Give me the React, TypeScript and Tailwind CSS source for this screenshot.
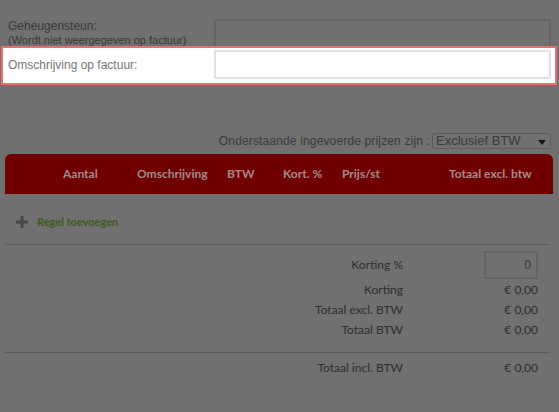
import React from 'react';

const columns = [
  { label: 'Aantal', width: 'w-[74px]' },
  { label: 'Omschrijving', width: 'w-[90px]' },
  { label: 'BTW', width: 'w-[56px]' },
  { label: 'Kort. %', width: 'w-[59px]' },
  { label: 'Prijs/st', width: 'w-[107px]' },
  { label: 'Totaal excl. btw', width: 'w-auto' },
];

const totals = [
  { label: 'Korting', value: '€ 0,00' },
  { label: 'Totaal excl. BTW', value: '€ 0,00' },
  { label: 'Totaal BTW', value: '€ 0,00' },
];

const TotalRow: React.FC<{ label: string; value: string }> = ({ label, value }) => (
  <div className="flex h-[20px] items-center justify-end pr-[21px]">
    <span className="text-right">{label}</span>
    <span className="w-[135px] text-right">{value}</span>
  </div>
);

export default function App() {
  return (
    <div className="relative h-[412px] w-[559px] overflow-hidden bg-[#707070] font-['Liberation_Sans',Arial,sans-serif]">
      {/* Geheugensteun */}
      <div className="mt-[19px] flex h-[27px] pl-[8px]">
        <div className="w-[206px] text-[#383838]">
          <div className="text-[12px] leading-[15px]">Geheugensteun:</div>
          <div className="whitespace-nowrap text-[11px] leading-[13px]">(Wordt niet weergegeven op factuur)</div>
        </div>
        <div className="h-[27px] w-[337px] border-2 border-b-0 border-[#646464]" />
      </div>

      {/* Highlighted row */}
      <div className="ml-[1px] flex h-[39px] w-[556px] items-start border-2 border-[#f26b6b] bg-white pl-[5px] pt-[2px]">
        <div className="flex h-[29px] w-[206px] items-center text-[12px] text-[#767676]">
          Omschrijving op factuur:
        </div>
        <div className="h-[29px] w-[337px] border-2 border-[#e2e2e2] bg-white" />
      </div>

      {/* Price mode */}
      <div className="mt-[48px] flex h-[16px] items-center justify-end pr-[8px] text-[12px] text-[#3a3a3a]">
        <span className="mr-[2px] tracking-[0.15px]">Onderstaande ingevoerde prijzen zijn :</span>
        <div className="flex h-[16px] w-[119px] items-center justify-between rounded-[2px] border border-[#5c5c5c] pl-[3px] pr-[4px] text-[13px]">
          <span>Exclusief BTW</span>
          <span className="mt-[2px] h-0 w-0 border-x-[4px] border-t-[5px] border-x-transparent border-t-[#111]" />
        </div>
      </div>

      {/* Table header */}
      <div className="ml-[5px] mt-[5px] flex h-[40px] w-[548px] items-center rounded-t-[6px] bg-[#700000] pl-[58px] font-['Lato',sans-serif] text-[12px] font-bold text-[#a48b8b]">
        {columns.map((c) => (
          <span key={c.label} className={`${c.width} whitespace-nowrap`}>
            {c.label}
          </span>
        ))}
      </div>

      {/* Add line */}
      <div className="mt-[17px] flex h-[22px] items-center pl-[16px] font-['Lato',sans-serif] text-[11px] font-bold text-[#3d5b1c]">
        <svg width="12" height="12" viewBox="0 0 12 12" className="mr-[9px]">
          <path d="M4.5 0h3v4.5H12v3H7.5V12h-3V7.5H0v-3h4.5z" fill="#474747" />
        </svg>
        <span>Regel toevoegen</span>
      </div>

      <div className="ml-[5px] mt-[11px] h-px w-[545px] bg-[#5c5c5c]" />

      {/* Totals */}
      <div className="font-['Lato',sans-serif] text-[12px] text-[#2e2e2e]">
        <div className="mt-[6px] flex h-[28px] items-center justify-end pr-[21px]">
          <span>Korting %</span>
          <div className="flex w-[135px] justify-end">
            <div className="flex h-[28px] w-[54px] items-center justify-end border-2 border-[#636363] pr-[5px] font-['Liberation_Sans',sans-serif] text-[12px] text-[#333a4a]">
              0
            </div>
          </div>
        </div>
        <div className="mt-[1px]">
          {totals.map((t) => (
            <TotalRow key={t.label} label={t.label} value={t.value} />
          ))}
        </div>
        <div className="ml-[5px] mt-[12px] h-px w-[545px] bg-[#5c5c5c]" />
        <div className="mt-[5px]">
          <TotalRow label="Totaal incl. BTW" value="€ 0,00" />
        </div>
      </div>
    </div>
  );
}
